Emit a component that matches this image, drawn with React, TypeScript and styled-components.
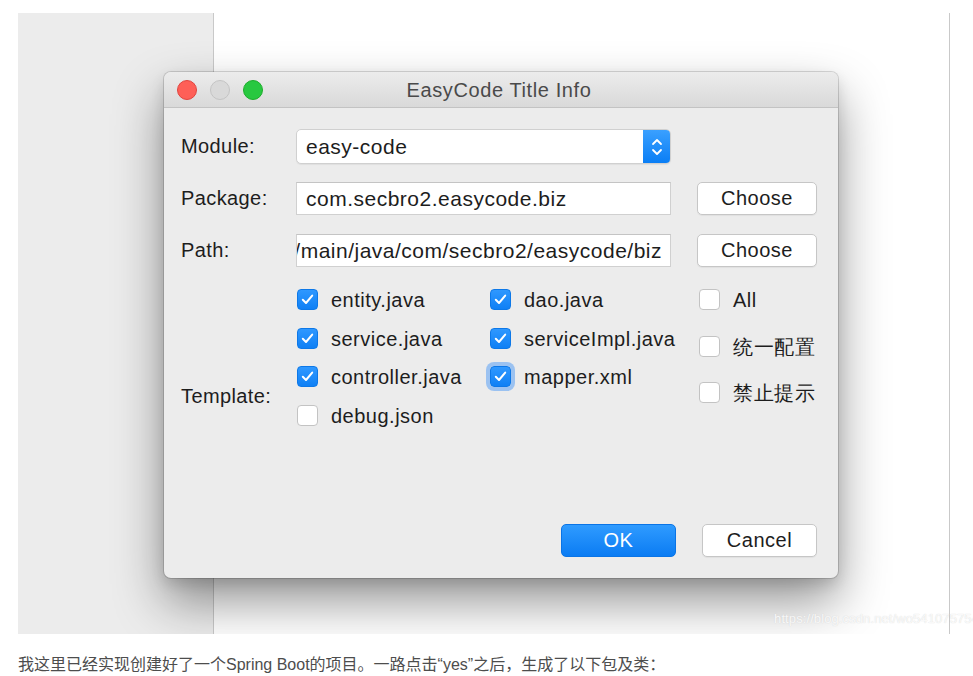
import React from "react";
import styled, { createGlobalStyle, css } from "styled-components";

const Global = createGlobalStyle`
  html, body { margin: 0; padding: 0; background: #ffffff; }
  body { font-family: "Liberation Sans", Arial, sans-serif; }
  * { box-sizing: border-box; }
`;

const Page = styled.div`
  width: 973px;
  height: 676px;
  padding: 13px 0 0 18px;
  overflow: hidden;
  background: #fff;
`;

const Shot = styled.div`
  position: relative;
  width: 955px;
  height: 621px;
  overflow: hidden;
  display: flex;
  background: #fff;
`;

const SidePanel = styled.div`
  width: 196px;
  height: 100%;
  background: #ececec;
  border-right: 1px solid #c9c9c9;
`;

const MainArea = styled.div`
  width: 736px;
  height: 100%;
  background: #ffffff;
  border-right: 1px solid #c9c9c9;
`;

const Watermark = styled.div`
  position: absolute;
  right: -6px;
  bottom: 8px;
  font-family: "Liberation Sans", Arial, sans-serif;
  font-size: 13px;
  color: rgba(255, 255, 255, 0.85);
  text-shadow: 0 0 1px rgba(190, 190, 190, 0.7);
  letter-spacing: 0.1px;
`;

const Dialog = styled.div`
  position: absolute;
  left: 146px;
  top: 59px;
  width: 674px;
  height: 506px;
  border-radius: 7px;
  background: #ececec;
  box-shadow: 0 0 0 1px rgba(0, 0, 0, 0.14), 0 24px 50px rgba(0, 0, 0, 0.42),
    0 6px 14px rgba(0, 0, 0, 0.12);
  display: flex;
  flex-direction: column;
  overflow: hidden;
`;

const TitleBar = styled.div`
  position: relative;
  height: 36px;
  flex: none;
  background: linear-gradient(#ececec, #d9d9d9);
  border-bottom: 1px solid #c3c3c3;
  display: flex;
  align-items: center;
  justify-content: center;
`;

const Lights = styled.div`
  position: absolute;
  left: 13px;
  top: 8px;
  display: flex;
  gap: 13px;
`;

const Light = styled.span<{ $c: string; $b: string }>`
  width: 20px;
  height: 20px;
  border-radius: 50%;
  background: ${(p) => p.$c};
  border: 1px solid ${(p) => p.$b};
`;

const Title = styled.div`
  font-size: 20px;
  letter-spacing: 0.6px;
  color: #4a4a4a;
  margin-top: 1px;
  margin-left: -4px;
`;

const Body = styled.div`
  flex: 1;
  display: flex;
  flex-direction: column;
  padding: 21px 21px 21px 17px;
`;

const Form = styled.div`
  display: grid;
  grid-template-columns: 115px 375px 146px;
`;

const Label = styled.div<{ $top?: number }>`
  font-size: 20px;
  letter-spacing: 0.4px;
  color: #1d1d1d;
  align-self: ${(p) => (p.$top ? "start" : "center")};
  padding-top: ${(p) => p.$top || 0}px;
`;

const Row = styled.div<{ $mt: number }>`
  display: contents;
  & > * { margin-top: ${(p) => p.$mt}px; }
`;

const Field = styled.div<{ $h: number; $rtl?: boolean }>`
  height: ${(p) => p.$h}px;
  background: #fff;
  border: 1px solid #d0d0d0;
  border-top-color: #c4c4c4;
  display: flex;
  align-items: center;
  padding: 0 9px;
  font-size: 21px;
  letter-spacing: 0.5px;
  color: #1d1d1d;
  white-space: nowrap;
  overflow: hidden;
  ${(p) =>
    p.$rtl &&
    css`
      justify-content: flex-end;
      padding: 0 8px 0 0;
    `}
`;

const Combo = styled.div`
  height: 35px;
  display: flex;
  background: #fff;
  border: 1px solid #d0d0d0;
  border-radius: 5px;
  overflow: hidden;
  box-shadow: 0 1px 1px rgba(0, 0, 0, 0.06);
`;

const ComboText = styled.div`
  flex: 1;
  display: flex;
  align-items: center;
  padding-left: 9px;
  padding-top: 1px;
  font-size: 21px;
  letter-spacing: 0.5px;
  color: #1d1d1d;
`;

const Stepper = styled.div`
  width: 27px;
  background: linear-gradient(#3aa0ff, #0a7ef5);
  display: flex;
  align-items: center;
  justify-content: center;
`;

const Button = styled.div<{ $primary?: boolean }>`
  height: 33px;
  border-radius: 5px;
  display: flex;
  align-items: center;
  justify-content: center;
  font-size: 20px;
  letter-spacing: 0.5px;
  ${(p) =>
    p.$primary
      ? css`
          background: linear-gradient(#2f9bff, #0b7cf3);
          color: #fff;
          border: 1px solid #0a74e6;
        `
      : css`
          background: #fff;
          color: #1d1d1d;
          border: 1px solid #c6c6c6;
          box-shadow: 0 1px 1px rgba(0, 0, 0, 0.05);
        `}
`;

const SideButton = styled(Button)`
  margin-left: 26px;
`;

const Template = styled.div`
  display: contents;
`;

const TplLabel = styled(Label)`
  margin-top: 18px;
`;

const CheckGrid = styled.div`
  margin-top: 22px;
  display: grid;
  grid-template-columns: 193px 193px;
  grid-auto-rows: 38.7px;
  margin-left: 1px;
`;

const SideChecks = styled.div`
  margin-top: 22px;
  margin-left: 28px;
  display: grid;
  grid-auto-rows: 46.5px;
`;

const CheckItem = styled.div`
  display: flex;
  align-items: flex-start;
  gap: 13px;
  font-size: 20px;
  letter-spacing: 0.5px;
  color: #1d1d1d;
  line-height: 22px;
  white-space: nowrap;
`;

const Box = styled.span<{ $on?: boolean; $focus?: boolean }>`
  flex: none;
  width: 21px;
  height: 21px;
  border-radius: 4px;
  display: flex;
  align-items: center;
  justify-content: center;
  ${(p) =>
    p.$on
      ? css`
          background: linear-gradient(#2f98ff, #0f80f5);
          border: 1px solid #0d78e8;
        `
      : css`
          background: #fff;
          border: 1px solid #c3c3c3;
        `}
  ${(p) =>
    p.$focus &&
    css`
      box-shadow: 0 0 0 4px rgba(90, 160, 245, 0.55);
    `}
`;

const Footer = styled.div`
  margin-top: auto;
  display: flex;
  justify-content: flex-end;
  gap: 26px;
  & > * { width: 115px; }
`;

const Caption = styled.p`
  margin: 17px 0 0 0;
  font-family: "Liberation Sans", "Noto Sans CJK SC", sans-serif;
  font-size: 16px;
  color: #4d4d4d;
  white-space: nowrap;
`;

const Check = () => (
  <svg width="13" height="11" viewBox="0 0 13 11">
    <path d="M1.8 5.8 L5 9 L11.2 1.6" fill="none" stroke="#fff" strokeWidth="2" strokeLinecap="round" strokeLinejoin="round" />
  </svg>
);

const Cb = ({ on, focus, label }: { on?: boolean; focus?: boolean; label: string }) => (
  <CheckItem>
    <Box $on={on} $focus={focus}>{on && <Check />}</Box>
    <span>{label}</span>
  </CheckItem>
);

export default function App() {
  return (
    <>
      <Global />
      <Page>
        <Shot>
          <SidePanel />
          <MainArea />
          <Dialog>
            <TitleBar>
              <Lights>
                <Light $c="#fe5f57" $b="#e0443e" />
                <Light $c="#d9d9d9" $b="#c4c4c4" />
                <Light $c="#28c840" $b="#1dad2b" />
              </Lights>
              <Title>EasyCode Title Info</Title>
            </TitleBar>
            <Body>
              <Form>
                <Row $mt={0}>
                  <Label>Module:</Label>
                  <Combo>
                    <ComboText>easy-code</ComboText>
                    <Stepper>
                      <svg width="12" height="20" viewBox="0 0 12 20">
                        <path d="M2 7 L6 3 L10 7 M2 13 L6 17 L10 13" fill="none" stroke="#fff" strokeWidth="1.8" strokeLinecap="round" strokeLinejoin="round" />
                      </svg>
                    </Stepper>
                  </Combo>
                  <span />
                </Row>
                <Row $mt={18}>
                  <Label>Package:</Label>
                  <Field $h={33}>com.secbro2.easycode.biz</Field>
                  <SideButton>Choose</SideButton>
                </Row>
                <Row $mt={19}>
                  <Label>Path:</Label>
                  <Field $h={33} $rtl>src/main/java/com/secbro2/easycode/biz</Field>
                  <SideButton>Choose</SideButton>
                </Row>
                <Template>
                  <TplLabel $top={100}>Template:</TplLabel>
                  <CheckGrid>
                    <Cb on label="entity.java" />
                    <Cb on label="dao.java" />
                    <Cb on label="service.java" />
                    <Cb on label="serviceImpl.java" />
                    <Cb on label="controller.java" />
                    <Cb on focus label="mapper.xml" />
                    <Cb label="debug.json" />
                  </CheckGrid>
                  <SideChecks>
                    <Cb label="All" />
                    <Cb label="统一配置" />
                    <Cb label="禁止提示" />
                  </SideChecks>
                </Template>
              </Form>
              <Footer>
                <Button $primary>OK</Button>
                <Button>Cancel</Button>
              </Footer>
            </Body>
          </Dialog>
          <Watermark>https://blog.csdn.net/wo541075754</Watermark>
        </Shot>
        <Caption>我这里已经实现创建好了一个Spring Boot的项目。一路点击“yes”之后，生成了以下包及类：</Caption>
      </Page>
    </>
  );
}
